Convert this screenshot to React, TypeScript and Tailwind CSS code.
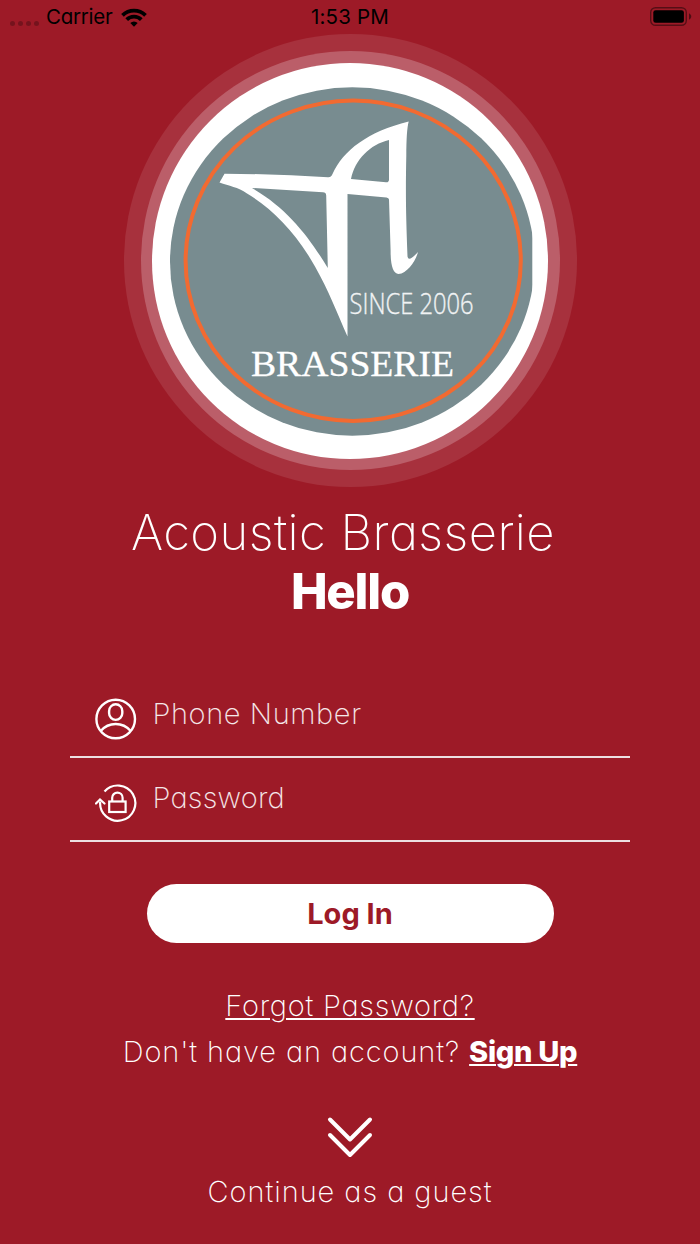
import type { ReactNode } from 'react'

function StatusBar() {
  return (
    <div className="grid h-[34px] w-full grid-cols-3 items-center text-black">
      <div className="flex items-center pl-[10px]">
        <div className="mt-[12px] flex gap-[3px]">
          {[0, 1, 2, 3].map((dot) => (
            <span key={dot} className="size-[5px] rounded-full bg-black/25" />
          ))}
        </div>
        <span className="ml-[7px] text-[20.5px] tracking-[-0.25px]">Carrier</span>
        <svg className="ml-[8px] h-[19px] w-[26px]" viewBox="0 0 26 19">
          <path d="M13 18.8 9.3 15a5.3 5.3 0 0 1 7.4 0Z" />
          <path d="M1.5 7.3a16.4 16.4 0 0 1 23 0M5.7 11.6a10.3 10.3 0 0 1 14.6 0" fill="none" stroke="#000" strokeWidth="3.8" />
        </svg>
      </div>
      <span className="text-center text-[20.5px] tracking-[0.2px]">1:53 PM</span>
      <svg className="mr-[8px] h-[20px] w-[42px] justify-self-end" viewBox="0 0 42 20">
        <rect x="0.7" y="0.7" width="35.6" height="17.6" rx="4.8" fill="none" stroke="#000" strokeOpacity="0.45" strokeWidth="1.4" />
        <rect x="3.3" y="3.2" width="30.6" height="12.6" rx="2.4" />
        <path d="M39 6.3c3 1.6 3 4.8 0 6.4Z" fillOpacity="0.5" />
      </svg>
    </div>
  )
}

function Logo() {
  return (
    <div className="flex size-[453px] items-center justify-center rounded-full bg-white/10">
      <div className="flex size-[419px] items-center justify-center rounded-full bg-[#bb5e69]">
        <div className="size-[396px] overflow-hidden rounded-full bg-white">
          <svg className="size-[396px]" viewBox="152 62.5 396 396">
            <clipPath id="plate">
              <rect x="152" y="62" width="380.3" height="400" />
            </clipPath>
            <ellipse cx="352.3" cy="261" rx="182.3" ry="174.2" fill="#788c90" clipPath="url(#plate)" />
            <ellipse cx="353.2" cy="260.2" rx="167.6" ry="160.2" fill="none" stroke="#f26a31" strokeWidth="4" />
            <path
              d="M219.5 182 224.5 173.2Q277 173.5 328 176.7Q331 177 332.5 173.5C343 150 368 131 408.7 121Q406.3 130 406.3 155C405.5 195 406 215 407.5 256Q408.5 262 418 251.5C415.5 261 407 273 398.5 273.5Q390.5 273 390.6 250L389 199Q388.8 197.5 386.5 197L347.5 193.5L347.5 336C337 312 329 291 315 266C296 232 272 208 247 193C238 186.5 229 185.5 219.5 182ZM252 187.5C288 208 310 238 327.8 267.5L326.2 195Q326 191.8 323 191.8ZM351 178.5 386 181.8Q389 182 389 179L389 139.5C370 144 355 159 351 178.5Z"
              fill="#fff"
              fillRule="evenodd"
            />
            <text x="349.5" y="313" fontSize="28.5" textLength="124" lengthAdjust="spacingAndGlyphs" fill="#f1f3f4" stroke="#f1f3f4" strokeWidth="0.35" className="font-['Open_Sans'] font-light">
              SINCE 2006
            </text>
            <text x="251" y="375.5" fontSize="35" textLength="203" lengthAdjust="spacingAndGlyphs" fill="#fff" stroke="#fff" strokeWidth="0.3" className="font-['Liberation_Serif']">
              BRASSERIE
            </text>
          </svg>
        </div>
      </div>
    </div>
  )
}

function UserIcon() {
  return (
    <svg className="mt-[9px] size-[42px]" viewBox="0 0 42 42" fill="none" stroke="#fff" strokeWidth="2.4">
      <circle cx="20.7" cy="21" r="19.3" />
      <rect x="14.1" y="6.3" width="13.2" height="15.6" rx="6.6" />
      <path d="M5.7 33Q11.7 26 20.7 26T35.7 33" />
    </svg>
  )
}

function LockIcon() {
  return (
    <svg className="mt-[8px] size-[42px]" viewBox="0 0 42 42" fill="none" stroke="#fff" strokeWidth="2.2">
      <path d="M9.5 9.5A17.6 17.6 0 1 1 5.2 19.5" />
      <path d="M1 21.5 5 17.5 9.5 21.5" strokeLinecap="round" />
      <rect x="14.2" y="19.5" width="16.4" height="10.5" />
      <path d="M17.2 19.5V15.8a5.2 5.2 0 0 1 10.4 0V19.5" />
    </svg>
  )
}

function Field({ icon, label, tracking }: { icon: ReactNode; label: string; tracking: string }) {
  return (
    <div className="flex h-[84.5px] w-[560px] items-center border-b-2 border-[#eddfe1] pl-[25px]">
      {icon}
      <span className={`mb-[2px] ml-[15.5px] text-[29px] font-extralight text-white/90 ${tracking}`}>{label}</span>
    </div>
  )
}

export default function App() {
  return (
    <main className="flex h-[1244px] w-[700px] flex-col items-center overflow-hidden bg-[#9d1a27] font-['Inter','Liberation_Sans',sans-serif] whitespace-nowrap text-white [font-feature-settings:'cv11']">
      <StatusBar />
      <Logo />

      <h1 className="mt-[16px] pr-[14px] text-[49px] leading-[60px] font-extralight tracking-[0.45px]">Acoustic Brasserie</h1>
      <h2 className="-mt-px text-[49px] leading-[60px] font-extrabold tracking-[-1.2px]">Hello</h2>

      <div className="mt-[51px] flex flex-col">
        <Field icon={<UserIcon />} label="Phone Number" tracking="tracking-[0.6px]" />
        <Field icon={<LockIcon />} label="Password" tracking="tracking-[0.2px]" />
      </div>

      <button className="mt-[42px] h-[59px] w-[407px] rounded-full bg-white text-[29px] font-bold text-[#9d1a27]">
        Log In
      </button>

      <a href="#forgot" className="mt-[40px] text-[29px] leading-[46px] font-extralight tracking-[0.75px] underline decoration-2 underline-offset-[2px]">
        Forgot Password?
      </a>
      <p className="text-[29px] leading-[46px] font-extralight tracking-[0.9px]">
        Don't have an account?{' '}
        <a href="#signup" className="font-extrabold tracking-[-0.3px] underline decoration-2 underline-offset-[2px]">
          Sign Up
        </a>
      </p>

      <svg className="mt-[41px] h-[42px] w-[46px]" viewBox="0 0 46 42" fill="none" stroke="#fff" strokeWidth="4" strokeLinecap="round" strokeLinejoin="round">
        <path d="M3 3.5 23 23.5 43 3.5M3 19 23 39 43 19" />
      </svg>
      <a href="#guest" className="mt-[11px] text-[29px] leading-[46px] font-extralight tracking-[0.95px]">
        Continue as a guest
      </a>
    </main>
  )
}
